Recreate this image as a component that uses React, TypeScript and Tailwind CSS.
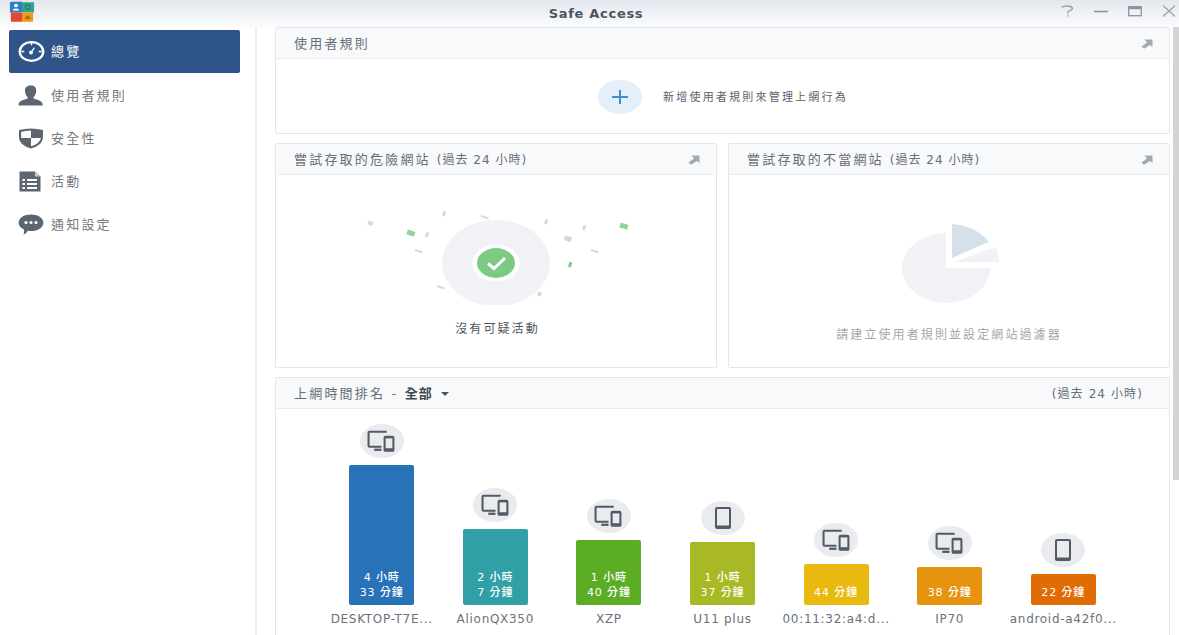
import React from "react";

const FONT = { fontFamily: '"DejaVu Sans","Noto Sans CJK TC",sans-serif' };

function Arrow() {
  return (
    <svg width="12" height="10" viewBox="0 0 12 10" className="shrink-0">
      <path d="M3.5 0.5H11.5V8L9 6L3 9.8L0.5 7.5L6 3.5Z" fill="#a3a9b0" />
    </svg>
  );
}

function Gauge() {
  return (
    <svg width="27" height="23" viewBox="0 0 28 23">
      <ellipse cx="14" cy="11.5" rx="12.2" ry="9.7" fill="none" stroke="#fff" strokeWidth="2.4" />
      <path d="M14 2v3M3.5 11.5h3M21.5 11.5h3" stroke="#fff" strokeWidth="1.4" />
      <circle cx="13.5" cy="12.5" r="2" fill="#fff" />
      <path d="M14 12L17 7.5" stroke="#fff" strokeWidth="1.3" />
    </svg>
  );
}
function Person() {
  return (
    <svg width="26" height="21" viewBox="0 0 26 21">
      <path d="M13 0.5c4 0 5.6 2.6 5.2 6-.3 2.6-1.6 4.6-2.6 5.6v1.4c2.5 1.1 8.4 2 9 5.5v1.5H.6V19c.6-3.5 6.5-4.4 9-5.5v-1.4c-1-1-2.3-3-2.6-5.6-.4-3.4 1.2-6 6-6z" fill="#5d6670" />
    </svg>
  );
}
function Shield() {
  return (
    <svg width="26" height="21" viewBox="0 0 26 21">
      <path d="M13 .5C17 .5 21 1 25 2v7c0 6-6 10-12 11.5C7 19 1 15 1 9V2C5 1 9 .5 13 .5z" fill="#5d6670" />
      <path d="M13 2.7V10H3.2V3.8C6 3.2 9.5 2.7 13 2.7zM13 10h9.8c-.5 4-5 7-9.8 8.3z" fill="#fff" />
    </svg>
  );
}
function Doc() {
  return (
    <svg width="24" height="21" viewBox="0 0 24 21">
      <path d="M1.5.5H17L22.5 5.5V20.5H1.5z" fill="#5d6670" />
      <path d="M17 .5V5.5H22.5z" fill="#c5c9ce" />
      <path d="M4.5 8h2.5v2H4.5zM4.5 12h2.5v2H4.5zM4.5 16h2.5v2H4.5zM9 8h10v2H9zM9 12h10v2H9zM9 16h10v2H9z" fill="#fff" />
    </svg>
  );
}
function Chat() {
  return (
    <svg width="26" height="22" viewBox="0 0 26 22">
      <path d="M13 .5c6.8 0 12.4 3.4 12.4 8.2S19.800 17 13 17c-1 0-2 0-3-.2C8.500 18.800 6.500 20.500 5.500 21c.5-1.500.7-3.500.5-5.500C2.800 14 .6 11.600.6 8.700.6 3.900 6.200.5 13 .5z" fill="#5d6670" />
      <circle cx="8" cy="8.500" r="1.600" fill="#fff" />
      <circle cx="13" cy="8.500" r="1.600" fill="#fff" />
      <circle cx="18" cy="8.500" r="1.600" fill="#fff" />
    </svg>
  );
}

function Logo() {
  return (
    <svg width="26" height="22" viewBox="0 0 28 23">
      <path d="M1 1.500Q1 .5 2 .5H14V12H1z" fill="#2f7fc4" />
      <path d="M14 1H27V12H14z" fill="#35a08c" />
      <path d="M2 12H14V22H3Q2 22 2 21z" fill="#dc4a32" />
      <path d="M14 12H26V21Q26 22 25 22H14z" fill="#ea9a22" />
      <circle cx="7.500" cy="4.500" r="2" fill="#fff" />
      <path d="M4 10c0-3 7-3 7 0z" fill="#fff" />
      <circle cx="20" cy="6" r="2.500" fill="none" stroke="#2a7f70" strokeWidth="1.200" />
      <path d="M17 19c1-5 5-5 6 0z" fill="#b86a10" />
    </svg>
  );
}

function Devices() {
  return (
    <svg width="29" height="23" viewBox="0 0 28 22">
      <path d="M18 2.500V1.500H2.500a1 1 0 0 0-1 1V15a1 1 0 0 0 1 1H14" fill="none" stroke="#525b65" strokeWidth="2" />
      <path d="M7 19H14" stroke="#525b65" strokeWidth="2.200" />
      <rect x="16" y="5.500" width="10.500" height="15.500" rx="1.800" fill="#525b65" />
      <rect x="18" y="8" width="6.500" height="9.500" fill="#e9ebee" />
    </svg>
  );
}
function Tablet() {
  return (
    <svg width="22" height="24" viewBox="0 0 22 24">
      <rect x="3" y="1" width="16" height="22" rx="2" fill="#525b65" />
      <rect x="5" y="3" width="12" height="16.500" fill="#e9ebee" />
    </svg>
  );
}

const NAV = [
  { label: "總覽", icon: <Gauge />, active: true },
  { label: "使用者規則", icon: <Person /> },
  { label: "安全性", icon: <Shield /> },
  { label: "活動", icon: <Doc /> },
  { label: "通知設定", icon: <Chat /> },
];

const BARS = [
  { name: "DESKTOP-T7E...", lines: ["4 小時", "33 分鐘"], h: "h-[140px]", c: "bg-[#2872b8]", tablet: false },
  { name: "AlionQX350", lines: ["2 小時", "7 分鐘"], h: "h-[76px]", c: "bg-[#31a0a6]", tablet: false },
  { name: "XZP", lines: ["1 小時", "40 分鐘"], h: "h-[65px]", c: "bg-[#5bad25]", tablet: false },
  { name: "U11 plus", lines: ["1 小時", "37 分鐘"], h: "h-[63px]", c: "bg-[#a9b925]", tablet: true },
  { name: "00:11:32:a4:d...", lines: ["44 分鐘"], h: "h-[41px]", c: "bg-[#e8b90f]", tablet: false },
  { name: "IP70", lines: ["38 分鐘"], h: "h-[38px]", c: "bg-[#e6930f]", tablet: false },
  { name: "android-a42f0...", lines: ["22 分鐘"], h: "h-[31px]", c: "bg-[#e06c05]", tablet: true },
];

const CONFETTI: [number, number, number, number, string][] = [
  [11, 16, 5, 4, "#d5d9df"], [49, 24, 8, 5, "#8fd49a"], [70, 27, 3, 5, "#d5d9df"],
  [87, 6, 3, 5, "#d5d9df"], [122, 11, 8, 2, "#d5d9df"], [107, 24, 8, 2, "#d5d9df"],
  [169, 24, 5, 4, "#d5d9df"], [189, 14, 3, 5, "#d5d9df"], [207, 30, 7, 5, "#d5d9df"],
  [227, 20, 3, 5, "#d5d9df"], [262, 17, 8, 5, "#8fd49a"], [232, 45, 8, 2, "#d5d9df"],
  [213, 57, 3, 5, "#7ccb82"], [56, 45, 8, 2, "#d5d9df"], [78, 81, 8, 2, "#d5d9df"],
  [109, 76, 3, 5, "#d5d9df"], [181, 87, 4, 4, "#d5d9df"],
];

function CardHeader({ title, right }: { title: React.ReactNode; right?: React.ReactNode }) {
  return (
    <div className="h-[31px] pt-[1px] shrink-0 flex items-center justify-between pl-[18px] pr-[16px] bg-[#f8f9fb] border-b border-[#e9edf2] text-[13px] tracking-[2.200px] text-[#666e77]">
      <div className="whitespace-nowrap">{title}</div>
      {right ?? <Arrow />}
    </div>
  );
}

function Past() {
  return <span className="text-[12px] tracking-[1px] ml-[6px]">(過去 24 小時)</span>;
}

export default function App() {
  return (
    <div style={FONT} className="w-[1179px] h-[635px] overflow-hidden bg-white flex flex-col">
      <header className="h-[27px] shrink-0 relative flex items-center justify-center bg-gradient-to-b from-[#e3e7ee] to-[#fbfcfd]">
        <div className="absolute left-[9px] top-[1px]"><Logo /></div>
        <span className="ml-[13px] text-[13px] font-bold tracking-[0.700px] text-[#4a5560]">Safe Access</span>
        <div className="absolute right-[3px] top-[4px] flex items-center gap-[20px]">
          <svg width="14" height="14" viewBox="0 0 14 14" fill="none" stroke="#9aa1a8" strokeWidth="1.300"><path d="M1.500 3.500Q3 2 7 2T12.500 4Q12.500 6 8 7.500V9.500" /><path d="M8 11v1.500" /></svg>
          <svg width="14" height="14" viewBox="0 0 14 14"><path d="M0 7.500H14" stroke="#8c949c" strokeWidth="1.600" /></svg>
          <svg width="14" height="14" viewBox="0 0 14 14" fill="none" stroke="#8c949c" strokeWidth="1.300"><rect x=".7" y="2.700" width="12.600" height="9" /><path d="M.7 4H13.300" strokeWidth="2.400" /></svg>
          <svg width="14" height="14" viewBox="0 0 14 14" fill="none" stroke="#9aa1a8" strokeWidth="1.200"><path d="M1 1.500L13 12.500M13 1.500L1 12.500" /></svg>
        </div>
      </header>

      <div className="flex-1 min-h-0 flex">
        <aside className="w-[257px] shrink-0 border-r-2 border-[#eef0f3] pl-[9px] pr-[15px] pt-[3px] flex flex-col">
          {NAV.map((n) => (
            <div
              key={n.label}
              className={`h-[43px] shrink-0 flex items-center rounded-[2px] text-[13px] tracking-[2.200px] ${n.active ? "bg-[#2f5488] text-white" : "text-[#737a82]"}`}
            >
              <span className={`w-[42px] pl-[9px] shrink-0 flex justify-start ${n.active ? "" : "mt-[2px]"}`}>{n.icon}</span>
              <span className={n.active ? "" : "mt-[2px]"}>{n.label}</span>
            </div>
          ))}
        </aside>

        <main className="flex-1 min-w-0 pl-[18px] pr-[2px] flex flex-col gap-[9px]">
          <section className="h-[107px] shrink-0 border border-[#e3e7ec] rounded-[2px] flex flex-col">
            <CardHeader title="使用者規則" />
            <div className="flex-1 flex items-center justify-center gap-[21px] pl-[1px] pb-[4px] translate-y-[3px]">
              <div className="w-[44px] h-[34px] rounded-[50%] bg-[#e4eff9] flex items-center justify-center">
                <svg width="16" height="14" viewBox="0 0 16 14"><path d="M8 0V14M0 7H16" stroke="#3e8fd8" strokeWidth="2" /></svg>
              </div>
              <span className="mt-[2px] text-[11px] tracking-[2.200px] text-[#5b636c]">新增使用者規則來管理上網行為</span>
            </div>
          </section>

          <div className="h-[225px] shrink-0 flex gap-[11px]">
            <section className="flex-1 border border-[#e3e7ec] rounded-[2px] flex flex-col">
              <CardHeader title={<>嘗試存取的危險網站<Past /></>} />
              <div className="flex-1 flex flex-col items-center pt-[30px]">
                <svg width="280" height="100" viewBox="0 0 280 100" className="ml-[6px]">
                  {CONFETTI.map(([x, y, w, h, c], i) => (
                    <rect key={i} x={x - 4 + w / 2} y={y - 2 + h / 2} width={w} height={h} fill={c} transform={`rotate(18 ${x} ${y})`} />
                  ))}
                  <ellipse cx="137" cy="58" rx="54" ry="43" fill="#f0f2f6" />
                  <ellipse cx="137" cy="58" rx="23.500" ry="18.500" fill="#fff" />
                  <ellipse cx="137" cy="58" rx="19" ry="15" fill="#7ccb82" />
                  <path d="M129 58.500L135 63.500L146 53" fill="none" stroke="#fff" strokeWidth="3" />
                </svg>
                <span className="mt-[15px] ml-[3px] text-[12px] tracking-[2.100px] text-[#4d555e]">沒有可疑活動</span>
              </div>
            </section>
            <section className="flex-1 border border-[#e3e7ec] rounded-[2px] flex flex-col">
              <CardHeader title={<>嘗試存取的不當網站<Past /></>} />
              <div className="flex-1 flex flex-col items-center pt-[41px]">
                <svg width="120" height="90" viewBox="0 0 120 90">
                  <path d="M57 17A44 35 0 1 0 101 52H57z" fill="#f0f2f6" />
                  <path d="M63 42V8C79 9 92 16 100 25.700z" fill="#d6e0ea" />
                  <path d="M66 46L106 30.700C109 35 110 41 110 46z" fill="#f0f2f6" />
                </svg>
                <span className="mt-[20px] text-[12px] tracking-[2.100px] text-[#a3a8ae]">請建立使用者規則並設定網站過濾器</span>
              </div>
            </section>
          </div>

          <section className="flex-1 min-h-0 border-l border-r border-t border-[#e3e7ec] rounded-t-[2px] flex flex-col">
            <CardHeader
              title={<>上網時間排名 - <b className="font-bold text-[#3f4750] tracking-[1px]">全部</b><span className="inline-block align-middle ml-[8px] w-0 h-0 border-l-[4px] border-r-[4px] border-t-[4px] border-l-transparent border-r-transparent border-t-[#4d555e]" /></>}
              right={<span className="mr-[10px] text-[12px] tracking-[1.100px]">(過去 24 小時)</span>}
            />
            <div className="flex-1 flex items-end justify-center pb-[5px]">
              {BARS.map((b) => (
                <div key={b.name} className="w-[113.600px] shrink-0 flex flex-col items-center">
                  <div className="w-[44px] h-[34px] rounded-[50%] bg-[#e9ebee] flex items-center justify-center mb-[7px]">
                    {b.tablet ? <Tablet /> : <Devices />}
                  </div>
                  <div className={`w-[65px] ${b.h} ${b.c} rounded-[2px] flex flex-col items-center justify-end pb-[5px] text-white text-[11px] leading-[15px] tracking-[0.900px] font-medium`}>
                    {b.lines.map((l) => <div key={l} className="whitespace-nowrap">{l}</div>)}
                  </div>
                  <div className="h-[25px] pt-[2px] flex items-center whitespace-nowrap text-[12px] tracking-[0.700px] text-[#6a7179]">{b.name}</div>
                </div>
              ))}
            </div>
          </section>
        </main>

        <div className="w-[7px] shrink-0 pl-[1px] flex flex-col">
          <div className="h-[453px] bg-[#d2d4d6]" />
        </div>
      </div>
    </div>
  );
}
